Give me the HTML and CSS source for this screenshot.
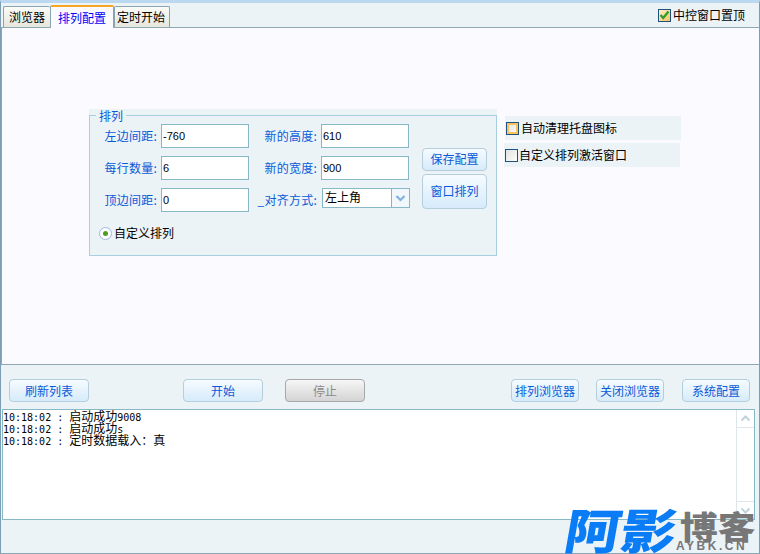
FILE: index.html
```html
<!DOCTYPE html>
<html lang="zh">
<head>
<meta charset="utf-8">
<title>中控</title>
<link rel="stylesheet" href="styles.css">
</head>
<body>
<div class="window">
  <div class="tabbar">
    <div class="tabs">
      <div class="tab">浏览器</div>
      <div class="tab active">排列配置</div>
      <div class="tab">定时开始</div>
    </div>
    <label class="topmost">
      <span class="check checked"><svg width="11" height="10" viewBox="0 0 11 10"><path d="M1.5 5 L4.2 8 L9.5 1.5" fill="none" stroke="#2f9e2f" stroke-width="2.4"/></svg></span>
      <span>中控窗口置顶</span>
    </label>
  </div>
  <div class="page">
    <div class="settings">
      <fieldset class="group">
        <legend>排列</legend>
        <div class="form">
          <div class="fields">
            <div class="field"><span class="lbl">左边间距:</span><span class="input">-760</span></div>
            <div class="field"><span class="lbl">新的高度:</span><span class="input">610</span></div>
            <div class="field"><span class="lbl">每行数量:</span><span class="input">6</span></div>
            <div class="field"><span class="lbl">新的宽度:</span><span class="input">900</span></div>
            <div class="field"><span class="lbl">顶边间距:</span><span class="input">0</span></div>
            <div class="field"><span class="lbl">_对齐方式:</span>
              <span class="select"><span class="select-text">左上角</span><span class="select-btn"><svg width="11" height="7" viewBox="0 0 11 7"><path d="M1.5 1 L5.5 5 L9.5 1" fill="none" stroke="#7fb2e0" stroke-width="2.2"/></svg></span></span>
            </div>
          </div>
          <div class="side-btns">
            <div class="btn save">保存配置</div>
            <div class="btn arrange">窗口排列</div>
          </div>
        </div>
        <label class="radio-row"><span class="radio"><span class="dot"></span></span><span>自定义排列</span></label>
      </fieldset>
      <div class="options">
        <label class="opt first"><span class="check hover"></span><span>自动清理托盘图标</span></label>
        <label class="opt"><span class="check"></span><span>自定义排列激活窗口</span></label>
      </div>
    </div>
  </div>
  <div class="toolbar">
    <div class="btn wide refresh">刷新列表</div>
    <div class="btn wide start">开始</div>
    <div class="btn wide disabled">停止</div>
    <div class="btn small arr">排列浏览器</div>
    <div class="btn small close">关闭浏览器</div>
    <div class="btn small sys">系统配置</div>
  </div>
  <div class="log">
    <div class="log-lines">
      <div class="log-line"><span class="mono">10:18:02 : </span>启动成功<span class="mono">9008</span></div>
      <div class="log-line"><span class="mono">10:18:02 : </span>启动成功<span class="mono">s</span></div>
      <div class="log-line"><span class="mono">10:18:02 : </span>定时数据载入：真</div>
    </div>
    <div class="scroll">
      <div class="sb up"><svg width="11" height="7" viewBox="0 0 11 7"><path d="M1.5 5.5 L5.5 1.5 L9.5 5.5" fill="none" stroke="#c0d2da" stroke-width="2"/></svg></div>
      <div class="track"></div>
      <div class="sb down"><svg width="11" height="7" viewBox="0 0 11 7"><path d="M1.5 1.5 L5.5 5.5 L9.5 1.5" fill="none" stroke="#c0d2da" stroke-width="2"/></svg></div>
    </div>
  </div>
  <div class="watermark">
    <span class="wm-a">阿影</span>
    <span class="wm-b"><span class="wm-cn">博客</span><span class="wm-en">AYBK.CN</span></span>
  </div>
</div>
</body>
</html>
```
FILE: styles.css
```css
* { box-sizing: border-box; }
html, body { margin: 0; padding: 0; }
body { width: 760px; height: 554px; overflow: hidden; background: #ecf3f7; font: 12px/14px "Noto Sans CJK SC", "Liberation Sans", sans-serif; color: #000; }
.window { position: relative; width: 760px; height: 554px; background: #ecf3f7; border-top: 3px solid #bcd8f0; border-left: 1px solid #7d9db5; border-right: 1px solid #7d9db5; border-bottom: 1px solid #8aa8b8; display: flex; flex-direction: column; }
.tabbar { height: 24px; display: flex; justify-content: space-between; flex: none; }
.tabs { display: flex; align-items: flex-end; padding-left: 2px; }
.tab { height: 21px; margin-bottom: 0; padding: 3px 4px 0 5px; background: linear-gradient(#fbfbf8, #e6e6dc); border: 1px solid #8aa3b0; border-bottom: 0; border-radius: 2px 2px 0 0; white-space: nowrap; }
.tab:first-child { width: 47px; border-right: 0; }
.tab:last-child { width: 56px; padding-left: 2px; }
.tab.active { width: 64px; height: 23px; margin-bottom: -1px; padding: 4px 0 0 7px; color: #0000ff; background: #fbfbff; border-top: 2px solid #f5a623; border-bottom: 0; position: relative; z-index: 1; }
.topmost { display: flex; align-items: center; gap: 2px; padding: 0 14px 0 0; height: 24px; margin-top: 0; }
.check { display: inline-flex; align-items: center; justify-content: center; width: 13px; height: 13px; flex: none; border: 1px solid #1c5180; background: linear-gradient(135deg, #e2e2de, #fdfdfb); }
.check.checked { background: linear-gradient(135deg, #fff2cf, #f9c25f); }
.check.hover { box-shadow: inset 0 0 0 2px #f8c260; }
.page { height: 338px; flex: none; background: #fbfbff; border-top: 1px solid #8fa8b5; border-bottom: 1px solid #8fa8b5; border-left: 1px solid #86a8c0; padding: 81px 0 0 87px; }
.settings { display: flex; align-items: flex-start; }
.group { width: 408px; height: 147px; margin: 0; padding: 1px 0 0 0; background: #ecf3f7; border: 1px solid #a6cfe0; box-shadow: 0 -6px 0 #ecf3f7; }
.group legend { margin-left: 6px; padding: 0 3px; color: #0a5ad8; line-height: 13px; }
.form { display: flex; margin-top: 1px; }
.fields { display: grid; grid-template-columns: 159px 160px; grid-auto-rows: 24px; row-gap: 8px; width: 332px; }
.field { display: flex; align-items: center; justify-content: flex-end; gap: 4px; }
.lbl { color: #0a5ad8; white-space: nowrap; letter-spacing: 0.25px; }
.input { width: 88px; height: 24px; border: 1px solid #86b8c6; background: #fff; padding: 4px 0 0 1px; font-family: "Liberation Sans", sans-serif; font-size: 11px; line-height: 14px; }
.field .select { align-self: flex-start; }
.select { width: 88px; height: 20px; display: flex; border: 1px solid #86b8c6; background: #fff; margin-left: 1px; margin-right: -1px; }
.select-text { flex: 1; padding: 1px 0 0 2px; }
.select-btn { width: 18px; border: 1px solid #7fb2e8; border-width: 0 0 0 1px; display: flex; align-items: center; justify-content: center; background: #f2f7fc; }
.side-btns { display: flex; flex-direction: column; gap: 3px; padding-top: 24px; }
.btn { display: flex; align-items: center; justify-content: center; color: #0a5ad8; border: 1px solid #b4cedb; border-radius: 4px; background: linear-gradient(#f6fbff, #d6ebfb); white-space: nowrap; flex: none; }
.save { width: 65px; height: 23px; padding-bottom: 2px; }
.arrange { width: 65px; height: 35px; padding-bottom: 2px; }
.radio-row { display: flex; align-items: center; gap: 2px; margin: 14px 0 0 9px; }
.radio { width: 13px; height: 13px; border-radius: 50%; border: 1px solid #9db8dc; background: #fff; display: flex; align-items: center; justify-content: center; flex: none; }
.dot { width: 5px; height: 5px; border-radius: 50%; background: #4c9e1e; }
.options { margin-left: 7px; display: flex; flex-direction: column; gap: 3px; padding-top: 7px; }
.opt { width: 176px; height: 24px; background: #ecf3f7; display: flex; align-items: center; gap: 1px; padding-left: 1px; }
.opt.first { margin-left: 1px; gap: 2px; }
.toolbar { height: 44px; flex: none; display: flex; padding: 14px 0 0 8px; }
.toolbar .btn { height: 23px; }
.wide { width: 80px; }
.small { width: 68px; }
.start { margin-left: 94px; }
.disabled { margin-left: 22px; color: #8a8a8a; border-color: #a8a8a8; background: linear-gradient(#f6f6f6, #d4d4d4); }
.arr { margin-left: 146px; }
.close { margin-left: 17px; }
.sys { margin-left: 18px; }
.log { margin-left: 1px; width: 753px; height: 111px; flex: none; border: 1px solid #86b8c6; background: #fff; display: flex; justify-content: space-between; }
.log-line { height: 12px; line-height: 12px; white-space: nowrap; }
.mono { font-family: "DejaVu Sans Mono", monospace; font-size: 10px; white-space: pre; }
.scroll { width: 18px; display: flex; flex-direction: column; border-left: 1px solid #dfe6ea; }
.sb { height: 18px; display: flex; align-items: center; justify-content: center; flex: none; }
.sb.up { border-bottom: 1px solid #dfe6ea; }
.sb.down { border-top: 1px solid #dfe6ea; }
.track { flex: 1; }
.watermark { position: absolute; left: 565px; top: 501px; width: 194px; height: 48px; display: flex; }
.wm-a { color: #0a7cf5; font-weight: 900; font-size: 48px; line-height: 48px; transform: skewX(-10deg) scaleX(1.16); transform-origin: left center; white-space: nowrap; width: 114px; }
.wm-b { display: flex; flex-direction: column; align-items: flex-start; margin-top: 5px; }
.wm-cn { color: #777; font-weight: 900; font-size: 32px; line-height: 32px; white-space: nowrap; transform: scaleX(1.18); transform-origin: left center; }
.wm-en { color: #777; font: bold 12px/11px "Liberation Sans", sans-serif; letter-spacing: 2.5px; margin-left: -4px; }
```
